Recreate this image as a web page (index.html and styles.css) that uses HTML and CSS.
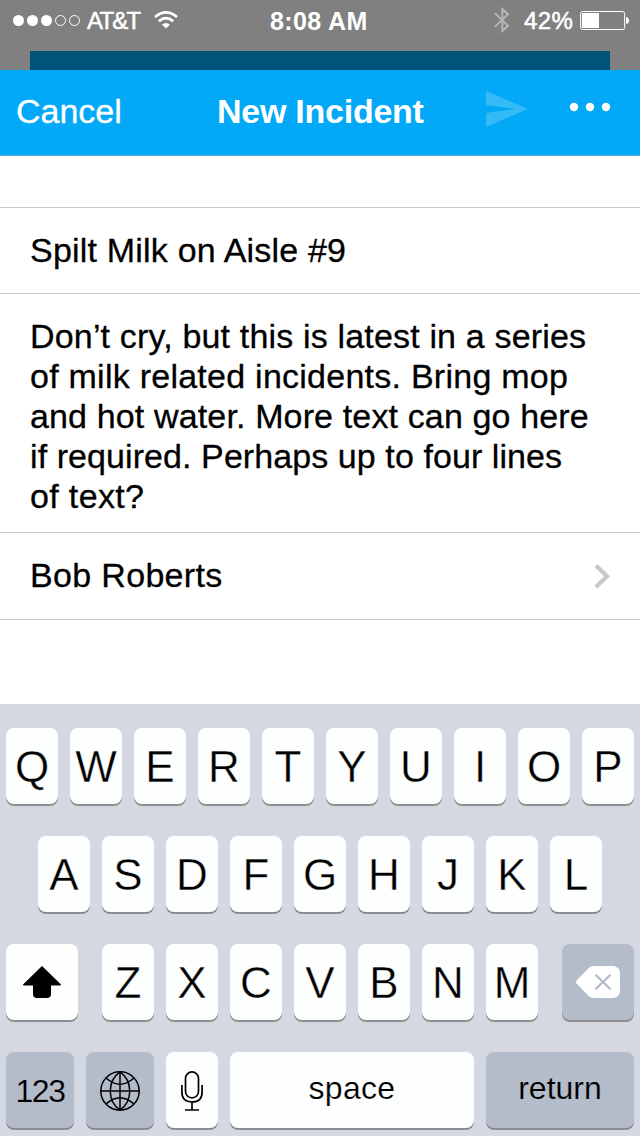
FILE: index.html
```html
<!DOCTYPE html>
<html lang="en">
<head>
<meta charset="utf-8">
<title>New Incident</title>
<link rel="stylesheet" href="styles.css">
</head>
<body>
<div class="screen">
  <div class="status">
    <svg class="signal" width="68" height="12" viewBox="0 0 68 12"><g fill="#fff"><circle cx="5.5" cy="5.5" r="5.5"/><circle cx="19.5" cy="5.5" r="5.5"/><circle cx="33.5" cy="5.5" r="5.5"/></g><g fill="none" stroke="#fff"><circle cx="47.5" cy="5.5" r="5"/><circle cx="61.5" cy="5.5" r="5"/></g></svg>
    <span class="carrier">AT&amp;T</span>
    <svg class="wifi" width="24" height="18" viewBox="0 0 24 18"><g fill="none" stroke="#fff" stroke-width="2.7"><path d="M1 6.1Q12-3.4 23 6.1"/><path d="M4.8 10.2Q12 4 19.2 10.2"/></g><path d="M8 13.6Q12 10.2 16 13.6L12 17.6Z" fill="#fff"/></svg>
    <span class="clock">8:08 AM</span>
    <svg class="bluetooth" width="16" height="26" viewBox="0 0 16 26"><path d="M1 6.3 14 18.7 8.3 24V2L14 7.2 1 19.6" fill="none" stroke="#b5b5b5" stroke-width="2"/></svg>
    <span class="percent">42%</span>
    <svg class="battery" width="50" height="20" viewBox="0 0 50 20"><rect x=".6" y="1.5" width="44" height="18" rx="2" fill="none" stroke="#fff"/><rect x="2" y="3" width="17" height="15" fill="#fff"/><path d="M46 7Q49 7.5 49 10.5T46 14Z" fill="#fff"/></svg>
  </div>
  <div class="behind"></div>
  <div class="navbar">
    <span class="cancel">Cancel</span>
    <span class="title">New Incident</span>
    <svg class="send" width="42" height="36" viewBox="0 0 42 36"><path d="M0 36 42 18 0 0V14L30 18 0 22Z" fill="#fff" fill-opacity=".2"/></svg>
    <svg class="more" width="42" height="10" viewBox="0 0 42 10"><g fill="#fff"><circle cx="5" cy="5" r="4.2"/><circle cx="21" cy="5" r="4.2"/><circle cx="37" cy="5" r="4.2"/></g></svg>
  </div>
  <div class="form">
    <div class="row subject"><span class="subject-text">Spilt Milk on Aisle #9</span></div>
    <div class="row details"><span class="l1">Don’t cry, but this is latest in a series</span><span class="l2">of milk related incidents. Bring mop</span><span class="l3">and hot water. More text can go here</span><span class="l4">if required. Perhaps up to four lines</span><span class="l5">of text?</span></div>
    <div class="row person"><span class="person-name">Bob Roberts</span><svg width="18" height="26" viewBox="0 0 18 26"><path d="M3 2.5 14 13.3 3 24" fill="none" stroke="#c7c7cc" stroke-width="4.2"/></svg></div>
  </div>
  <div class="keyboard">
    <div class="keys"><b>Q</b><b>W</b><b>E</b><b>R</b><b>T</b><b>Y</b><b>U</b><b>I</b><b>O</b><b>P</b></div>
    <div class="keys"><b>A</b><b>S</b><b>D</b><b>F</b><b>G</b><b>H</b><b>J</b><b>K</b><b>L</b></div>
    <div class="keys">
      <b class="shift"><svg width="38" height="32" viewBox="0 0 38 32"><path d="M19 0 38 18.5Q38 19.5 37 19.5H28V28Q28 32 24 32H14Q10 32 10 28V19.5H1Q0 19.5 0 18.5Z"/></svg></b>
      <b>Z</b><b>X</b><b>C</b><b>V</b><b>B</b><b>N</b><b>M</b>
      <b class="delete dark"><svg width="44" height="32" viewBox="0 0 44 32"><path d="M.6 14.4 12.5 2.2Q14.8 0 18 0H36Q44 0 44 8V24Q44 32 36 32H18Q14.8 32 12.5 29.8L.6 17.6Q-.6 16 .6 14.4Z" fill="#fff"/><path d="M19.5 8.7 34.5 23.3M34.5 8.7 19.5 23.3" stroke="#b4bbc9" stroke-width="2.3"/></svg></b>
    </div>
    <div class="keys">
      <b class="numbers dark small">123</b>
      <b class="globe dark"><svg width="40" height="40" viewBox="0 0 40 40"><g fill="none" stroke="#000" stroke-width="1.5"><circle cx="20" cy="20" r="19.2"/><path d="M20 .5V39.5M.5 20H39.5"/><path d="M20 .8C7 10 7 30 20 39.2M20 .8C33 10 33 30 20 39.2M6 7Q20 19.5 34 7M6 33Q20 20.5 34 33"/></g></svg></b>
      <b class="mic"><svg width="22" height="40" viewBox="0 0 22 40"><g fill="none" stroke="#000" stroke-width="1.7"><rect x="4.5" y=".9" width="13" height="26" rx="6.5"/><path d="M.9 14V21Q.9 31 11 31T21.1 21V14M11 31V39M4 39H18"/></g></svg></b>
      <b class="space small"><span>space</span></b>
      <b class="return dark small"><span>return</span></b>
    </div>
  </div>
</div>
</body>
</html>
```
FILE: styles.css
```css
* { box-sizing: border-box; }
body { margin: 0; font-family: "Liberation Sans", Arial, sans-serif; }
svg { display: block; flex: none; }
span { white-space: nowrap; }
.screen { width: 640px; height: 1136px; display: flex; flex-direction: column; background: #fff; overflow: hidden; }

.status { height: 51px; background: #808080; display: flex; align-items: flex-start; padding-left: 13px; color: #fff; font-size: 24px; line-height: 28px; }
.signal { margin-top: 15px; }
.carrier { width: 54px; margin: 7px 0 0 6px; letter-spacing: -1.8px; -webkit-text-stroke: 0.5px #fff; }
.wifi { margin: 11px 0 0 13px; }
.clock { width: 100px; margin: 7px 0 0 92px; font-weight: bold; font-size: 25px; letter-spacing: 0.4px; }
.bluetooth { margin: 7px 0 0 124px; }
.percent { width: 50px; margin: 7px 0 0 14px; letter-spacing: 0.4px; -webkit-text-stroke: 0.5px #fff; }
.battery { margin: 10px 0 0 6px; }
.behind { height: 19px; background: #005479; border: solid #808080; border-width: 0 30px; }

.navbar { height: 86px; background: #03a9f7; border-bottom: 1px solid #5bb2dc; display: flex; padding-left: 16px; color: #fff; font-size: 34px; line-height: 40px; }
.cancel { width: 106px; margin-top: 21px; -webkit-text-stroke: 0.3px #fff; }
.title { width: 207px; margin: 21px 0 0 95px; font-weight: bold; letter-spacing: -0.25px; }
.send { margin: 21px 0 0 62px; }
.more { margin: 32px 0 0 41px; }

.form { height: 548px; padding-top: 51px; font-size: 34px; line-height: 40px; color: #000; -webkit-text-stroke: 0.3px #000; }
.row { border-top: 1px solid #c8c8c9; padding-left: 30px; display: flex; }
.subject { height: 86px; padding-top: 22px; }
.details { height: 239px; padding-top: 22px; flex-direction: column; align-items: flex-start; }
.person { height: 88px; padding-top: 22px; padding-right: 29px; justify-content: space-between; border-bottom: 1px solid #c8c8c9; }
.person svg { margin-top: 8px; }
.subject-text { letter-spacing: 0.2px; }
.l1 { letter-spacing: 0.17px; }
.l2 { letter-spacing: 0.25px; }
.l3 { letter-spacing: 0.14px; }
.l4 { letter-spacing: 0.08px; }
.l5 { letter-spacing: 0.35px; }
.person-name { letter-spacing: 0.33px; }

.keyboard { flex: 1; background: #d5d8e0; padding-top: 24px; display: flex; flex-direction: column; gap: 32px; }
.keys { display: flex; justify-content: center; gap: 12px; height: 76px; }
.keys b { width: 52px; height: 76px; background: #fdfefe; border-radius: 8px; box-shadow: 0 2px 0 #8b8d91; display: flex; justify-content: center; align-items: center; font-weight: normal; font-size: 44px; line-height: 50px; padding-top: 2px; -webkit-text-stroke: 0.4px #fdfefe; }
.keys .dark { background: #b4bbc9; -webkit-text-stroke-color: #b4bbc9; }
.keys .small { font-size: 32px; -webkit-text-stroke-width: 0.2px; }
.keys .shift { width: 72px; margin-right: 12px; padding: 0; }
.keys .delete { width: 72px; margin-left: 12px; padding: 0; }
.keys .numbers, .keys .globe { width: 68px; }
.keys .numbers { letter-spacing: -1.5px; }
.keys .space { width: 244px; padding: 0 0 4px; letter-spacing: 0.3px; }
.keys .return { width: 148px; padding: 0 0 4px; }
```
